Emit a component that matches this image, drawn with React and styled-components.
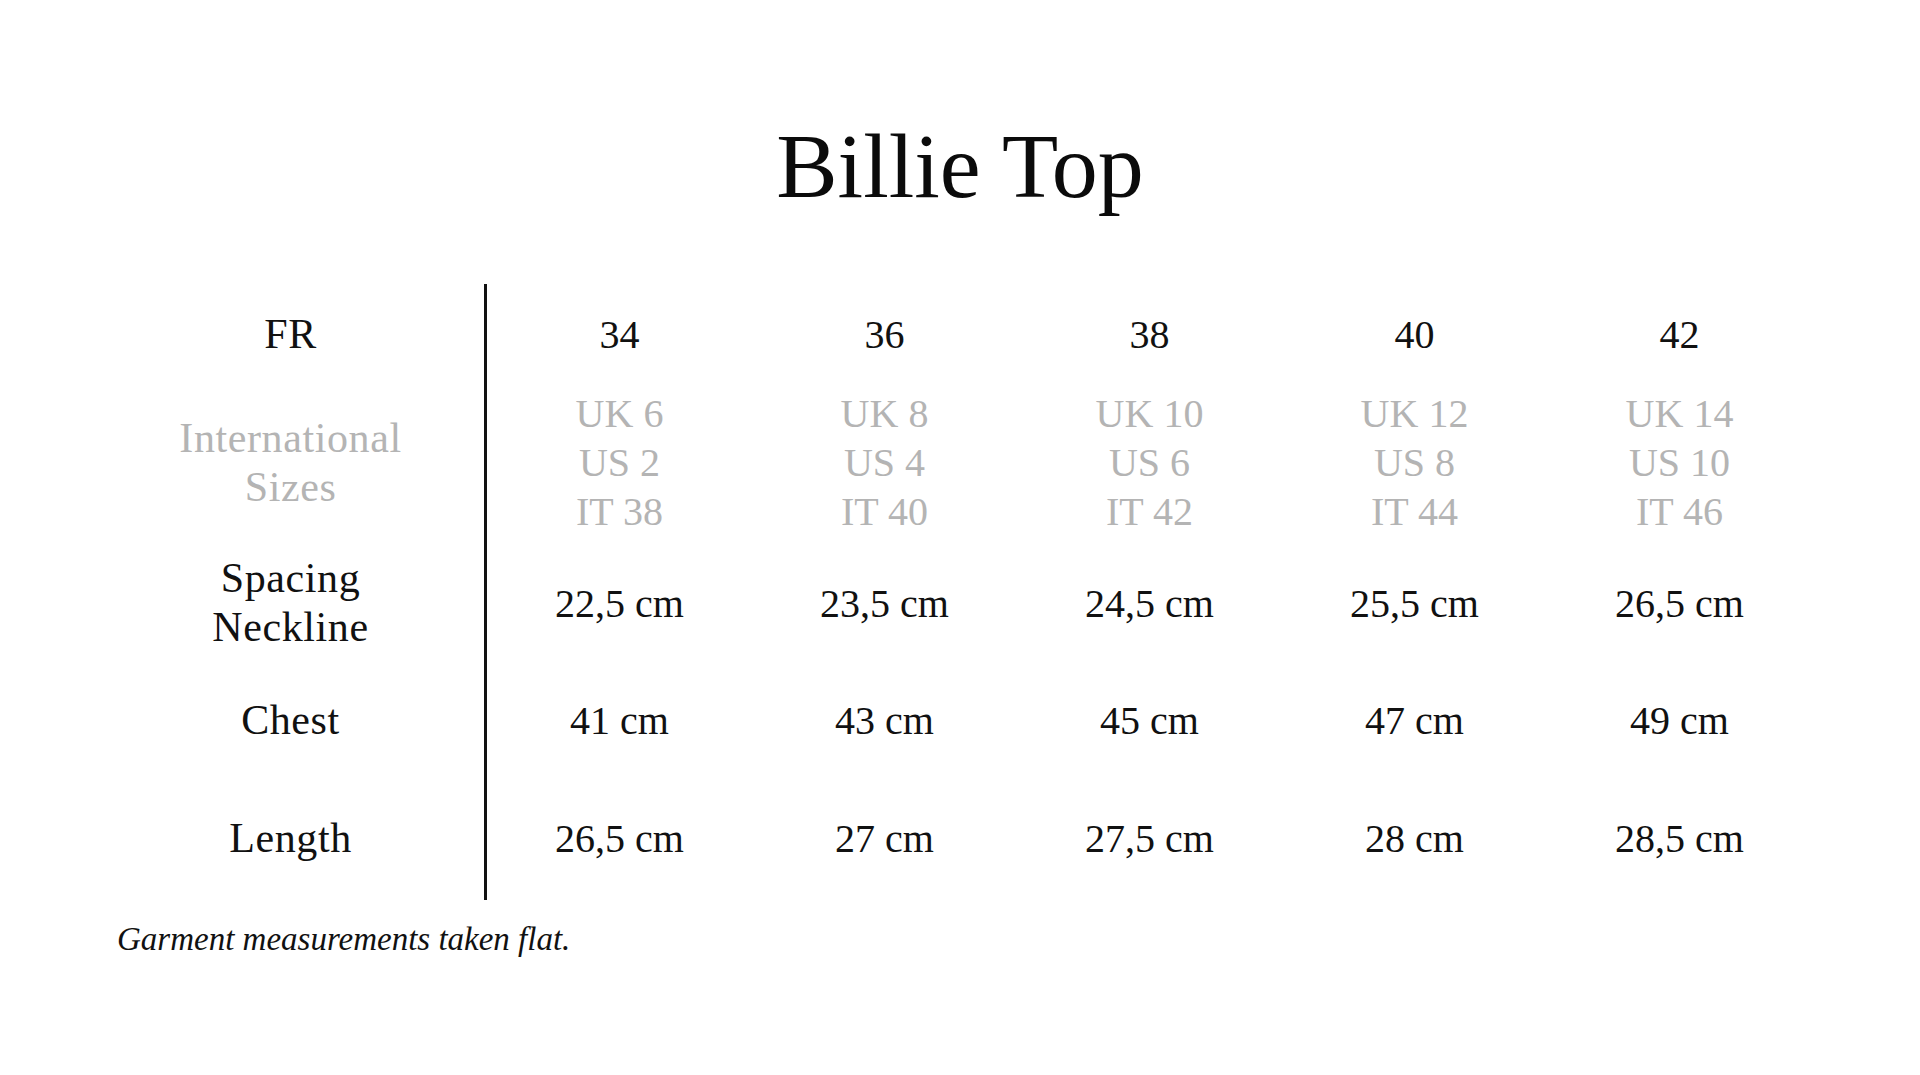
import React from "react";
import styled, { createGlobalStyle } from "styled-components";

const GlobalStyle = createGlobalStyle`
  html, body {
    margin: 0;
    padding: 0;
    background: #ffffff;
  }
  body {
    font-family: "Liberation Serif", "Times New Roman", serif;
    color: #111111;
  }
`;

const Page = styled.main`
  width: 1920px;
  min-height: 1075px;
  box-sizing: border-box;
  padding-top: 120px;
  display: flex;
  flex-direction: column;
`;

const Title = styled.h1`
  margin: 0;
  font-size: 92px;
  line-height: 1;
  font-weight: normal;
  text-align: center;
  color: #0b0b0b;
`;

const Table = styled.section`
  margin-top: 72px;
  margin-left: 97px;
  display: flex;
  flex-direction: column;
`;

const Row = styled.div`
  display: grid;
  grid-template-columns: 390px repeat(5, 265px);
  height: ${(p) => p.$h}px;
`;

const Label = styled.div`
  box-sizing: border-box;
  border-right: 3px solid #111111;
  display: flex;
  flex-direction: column;
  align-items: center;
  justify-content: center;
  text-align: center;
  font-size: 42px;
  letter-spacing: 0.6px;
  line-height: 49px;
  color: ${(p) => (p.$muted ? "#b4b4b4" : "#111111")};
`;

const Value = styled.div`
  display: flex;
  flex-direction: column;
  align-items: center;
  justify-content: center;
  text-align: center;
  font-size: 40px;
  line-height: 49px;
  color: ${(p) => (p.$muted ? "#b4b4b4" : "#111111")};
`;

const Line = styled.span`
  display: block;
  white-space: nowrap;
`;

const Note = styled.p`
  margin: 20px 0 0 117px;
  font-size: 33px;
  line-height: 38px;
  font-style: italic;
  color: #111111;
`;

const sizes = ["34", "36", "38", "40", "42"];
const intl = [
  ["UK 6", "US 2", "IT 38"],
  ["UK 8", "US 4", "IT 40"],
  ["UK 10", "US 6", "IT 42"],
  ["UK 12", "US 8", "IT 44"],
  ["UK 14", "US 10", "IT 46"],
];
const neckline = ["22,5 cm", "23,5 cm", "24,5 cm", "25,5 cm", "26,5 cm"];
const chest = ["41 cm", "43 cm", "45 cm", "47 cm", "49 cm"];
const length = ["26,5 cm", "27 cm", "27,5 cm", "28 cm", "28,5 cm"];

export default function App() {
  return (
    <>
      <GlobalStyle />
      <Page>
        <Title>Billie Top</Title>
        <Table>
          <Row $h={100}>
            <Label>FR</Label>
            {sizes.map((s) => (
              <Value key={s}>{s}</Value>
            ))}
          </Row>
          <Row $h={157}>
            <Label $muted>
              <Line>International</Line>
              <Line>Sizes</Line>
            </Label>
            {intl.map((group) => (
              <Value key={group[0]} $muted>
                {group.map((g) => (
                  <Line key={g}>{g}</Line>
                ))}
              </Value>
            ))}
          </Row>
          <Row $h={124}>
            <Label>
              <Line>Spacing</Line>
              <Line>Neckline</Line>
            </Label>
            {neckline.map((v) => (
              <Value key={v}>{v}</Value>
            ))}
          </Row>
          <Row $h={111}>
            <Label>Chest</Label>
            {chest.map((v) => (
              <Value key={v}>{v}</Value>
            ))}
          </Row>
          <Row $h={124}>
            <Label>Length</Label>
            {length.map((v) => (
              <Value key={v}>{v}</Value>
            ))}
          </Row>
        </Table>
        <Note>Garment measurements taken flat.</Note>
      </Page>
    </>
  );
}
